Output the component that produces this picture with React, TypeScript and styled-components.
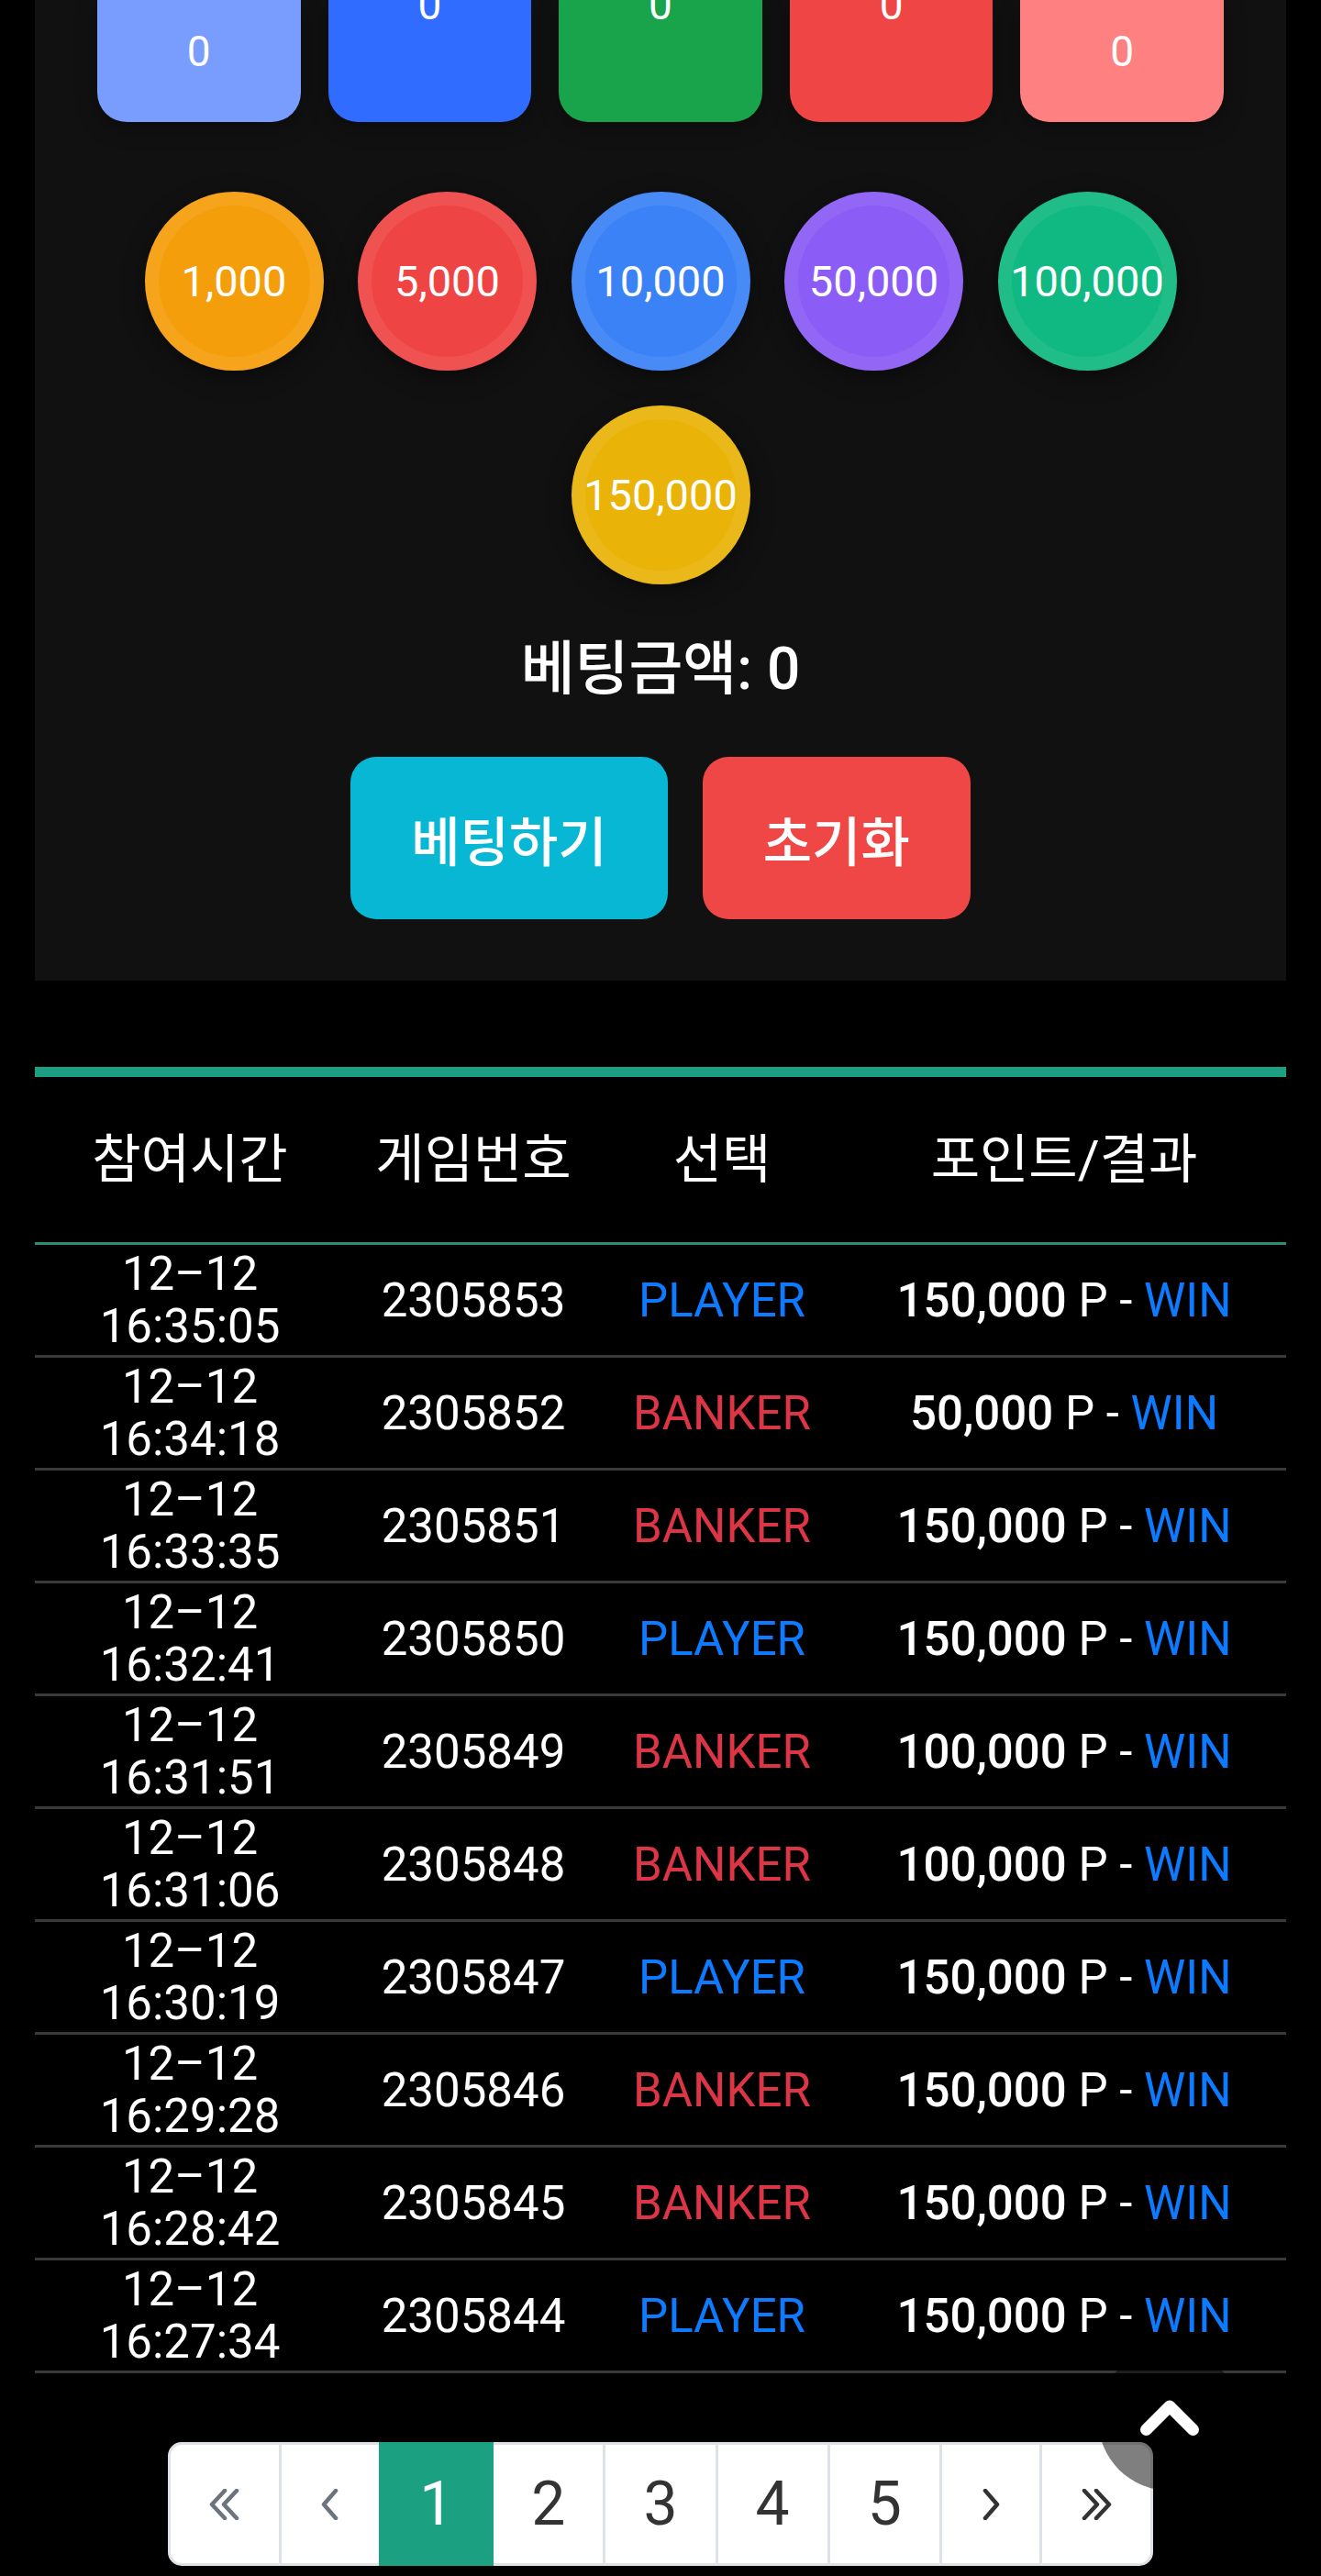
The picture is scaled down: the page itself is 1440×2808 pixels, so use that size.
import React from 'react';
import styled, { createGlobalStyle } from 'styled-components';

const GlobalStyle = createGlobalStyle`
	html, body {
		margin: 0;
		padding: 0;
		background: #000;
	}
	body {
		font-family: Roboto, "Noto Sans CJK KR", sans-serif;
		color: #fff;
	}
	* {
		box-sizing: border-box;
	}
`;

type Pick = 'PLAYER' | 'BANKER';

interface HistoryRow {
	time: string;
	round: string;
	pick: Pick;
	amount: string;
}

const cards = [
	{ color: '#789dfe', lift: 50 },
	{ color: '#306cff', lift: 101 },
	{ color: '#19a34a', lift: 101 },
	{ color: '#ef4545', lift: 101 },
	{ color: '#ff8080', lift: 50 },
];

const chips = [
	{ label: '1,000', color: '#f59e0b' },
	{ label: '5,000', color: '#ef4444' },
	{ label: '10,000', color: '#3b82f6' },
	{ label: '50,000', color: '#8b5cf6' },
	{ label: '100,000', color: '#10b981' },
	{ label: '150,000', color: '#eab308' },
];

const rows: HistoryRow[] = [
	{ time: '16:35:05', round: '2305853', pick: 'PLAYER', amount: '150,000' },
	{ time: '16:34:18', round: '2305852', pick: 'BANKER', amount: '50,000' },
	{ time: '16:33:35', round: '2305851', pick: 'BANKER', amount: '150,000' },
	{ time: '16:32:41', round: '2305850', pick: 'PLAYER', amount: '150,000' },
	{ time: '16:31:51', round: '2305849', pick: 'BANKER', amount: '100,000' },
	{ time: '16:31:06', round: '2305848', pick: 'BANKER', amount: '100,000' },
	{ time: '16:30:19', round: '2305847', pick: 'PLAYER', amount: '150,000' },
	{ time: '16:29:28', round: '2305846', pick: 'BANKER', amount: '150,000' },
	{ time: '16:28:42', round: '2305845', pick: 'BANKER', amount: '150,000' },
	{ time: '16:27:34', round: '2305844', pick: 'PLAYER', amount: '150,000' },
];

const Chevron = ({ double, dir }: { double?: boolean; dir: 'left' | 'right' }) => {
	const flip = dir === 'right' ? 'scale(-1,1)' : undefined;
	return double ? (
		<svg width="36" height="34" viewBox="0 0 36 34" fill="none" stroke="currentColor" strokeWidth="4.5" strokeLinecap="round" strokeLinejoin="round">
			<g transform={flip} style={{ transformOrigin: '18px 17px' }}>
				<polyline points="18,2 4,17 18,32" />
				<polyline points="31,2 17,17 31,32" />
			</g>
		</svg>
	) : (
		<svg width="24" height="34" viewBox="0 0 24 34" fill="none" stroke="currentColor" strokeWidth="4.5" strokeLinecap="round" strokeLinejoin="round">
			<g transform={flip} style={{ transformOrigin: '12px 17px' }}>
				<polyline points="18,2 5,17 18,32" />
			</g>
		</svg>
	);
};

const App = () => {
	return (
		<>
			<GlobalStyle />
			<Page>
				<Panel>
					<CardRow>
						{cards.map((card, i) => (
							<BetCard key={i} $bg={card.color} $lift={card.lift}>
								0
							</BetCard>
						))}
					</CardRow>
					<ChipWrap>
						{chips.map((chip) => (
							<Chip key={chip.label} $bg={chip.color}>
								{chip.label}
							</Chip>
						))}
					</ChipWrap>
					<Total>베팅금액: 0</Total>
					<Actions>
						<ActionButton $bg="#08b7d4">베팅하기</ActionButton>
						<ActionButton $bg="#ef4646">초기화</ActionButton>
					</Actions>
				</Panel>

				<Board>
					<HeadRow>
						<span>참여시간</span>
						<span>게임번호</span>
						<span>선택</span>
						<span>포인트/결과</span>
					</HeadRow>
					{rows.map((row) => (
						<Row key={row.round}>
							<TimeCell>
								12–12
								<br />
								{row.time}
							</TimeCell>
							<span>{row.round}</span>
							<PickText $pick={row.pick}>{row.pick}</PickText>
							<span>
								<Amount>{row.amount}</Amount> P - <Win>WIN</Win>
							</span>
						</Row>
					))}
				</Board>

				<Pager>
					<PageItem $muted>
						<Chevron double dir="left" />
					</PageItem>
					<PageItem $muted>
						<Chevron dir="left" />
					</PageItem>
					<PageItem $active>1</PageItem>
					<PageItem>2</PageItem>
					<PageItem>3</PageItem>
					<PageItem>4</PageItem>
					<PageItem>5</PageItem>
					<PageItem>
						<Chevron dir="right" />
					</PageItem>
					<PageItem>
						<Chevron double dir="right" />
					</PageItem>
				</Pager>
			</Page>

			<TopButton aria-label="맨 위로">
				<svg width="68" height="46" viewBox="0 0 68 46" fill="none" stroke="#fff" strokeWidth="13" strokeLinecap="round" strokeLinejoin="round">
					<polyline points="8.5,37.5 34,12 59.5,37.5" />
				</svg>
			</TopButton>
		</>
	);
};

export default App;

const Page = styled.div`
	padding: 0 38px 10px;
	background: #000;
`;

const Panel = styled.section`
	background: #111;
	padding: 0 68px 67px;
	display: flex;
	flex-direction: column;
	align-items: center;
`;

const CardRow = styled.div`
	display: flex;
	gap: 30px;
	width: 100%;
`;

const BetCard = styled.div<{ $bg: string; $lift: number }>`
	flex: 1;
	height: 133px;
	background: ${(p) => p.$bg};
	border-radius: 0 0 32px 32px;
	display: flex;
	flex-direction: column;
	justify-content: flex-end;
	align-items: center;
	padding-bottom: ${(p) => p.$lift}px;
	font-size: 46px;
	line-height: 54px;
	color: #fff;
	box-shadow: 0 6px 22px rgba(0, 0, 0, 0.35);
`;

const ChipWrap = styled.div`
	display: flex;
	flex-wrap: wrap;
	justify-content: center;
	gap: 38px 37.5px;
	width: 1130px;
	margin-top: 76px;
`;

const Chip = styled.button<{ $bg: string }>`
	width: 195px;
	height: 195px;
	padding: 0;
	border-radius: 50%;
	border: 15px solid rgba(255, 255, 255, 0.07);
	background: ${(p) => p.$bg};
	color: #fff;
	font-family: inherit;
	font-size: 47px;
	font-weight: 400;
	display: flex;
	align-items: center;
	justify-content: center;
	box-shadow: 0 8px 26px rgba(0, 0, 0, 0.4);
	white-space: nowrap;
`;

const Total = styled.div`
	margin-top: 56px;
	font-size: 64px;
	font-weight: 500;
	line-height: 74px;
`;

const Actions = styled.div`
	display: flex;
	gap: 38px;
	margin-top: 58px;
`;

const ActionButton = styled.button<{ $bg: string }>`
	height: 177px;
	padding: 0 66px;
	border: none;
	border-radius: 28px;
	background: ${(p) => p.$bg};
	color: #fff;
	font-family: inherit;
	font-size: 58px;
	font-weight: 500;
`;

const Board = styled.div`
	margin-top: 94px;
	border-top: 11px solid #1c9f82;
`;

const grid = `
	display: grid;
	grid-template-columns: 338px 280px 262px 1fr;
	align-items: center;
	text-align: center;
`;

const HeadRow = styled.div`
	${grid};
	height: 183px;
	padding-bottom: 10px;
	border-bottom: 3px solid #2b8f78;
	font-size: 58px;
	font-weight: 400;
`;

const Row = styled.div`
	${grid};
	height: 123px;
	border-bottom: 3px solid #3a3a3a;
	font-size: 51px;
	line-height: 57px;
`;

const TimeCell = styled.span`
	display: block;
`;

const PickText = styled.span<{ $pick: Pick }>`
	color: ${(p) => (p.$pick === 'PLAYER' ? '#0d7bff' : '#dc3545')};
`;

const Amount = styled.span`
	font-weight: 500;
`;

const Win = styled.span`
	color: #0d7bff;
`;

const Pager = styled.ul`
	display: flex;
	justify-content: center;
	list-style: none;
	margin: 75px 0 0;
	padding: 0;
`;

const PageItem = styled.li<{ $active?: boolean; $muted?: boolean }>`
	height: 135px;
	padding: 0 41px;
	margin-left: -3px;
	display: flex;
	align-items: center;
	justify-content: center;
	border: 3px solid ${(p) => (p.$active ? '#1ca082' : '#dee2e6')};
	background: ${(p) => (p.$active ? '#1ca082' : '#fff')};
	color: ${(p) => (p.$active ? '#fff' : p.$muted ? '#6c757d' : '#333')};
	font-size: 66px;
	line-height: 1;
	position: relative;
	z-index: ${(p) => (p.$active ? 1 : 0)};

	&:first-child {
		margin-left: 0;
		border-radius: 15px 0 0 15px;
	}
	&:last-child {
		border-radius: 0 15px 15px 0;
	}
`;

const TopButton = styled.button`
	position: fixed;
	right: 87px;
	bottom: 93px;
	width: 156px;
	height: 156px;
	border-radius: 50%;
	border: none;
	padding: 0 0 6px;
	background: rgba(0, 0, 0, 0.5);
	display: flex;
	align-items: center;
	justify-content: center;
	z-index: 10;
`;
